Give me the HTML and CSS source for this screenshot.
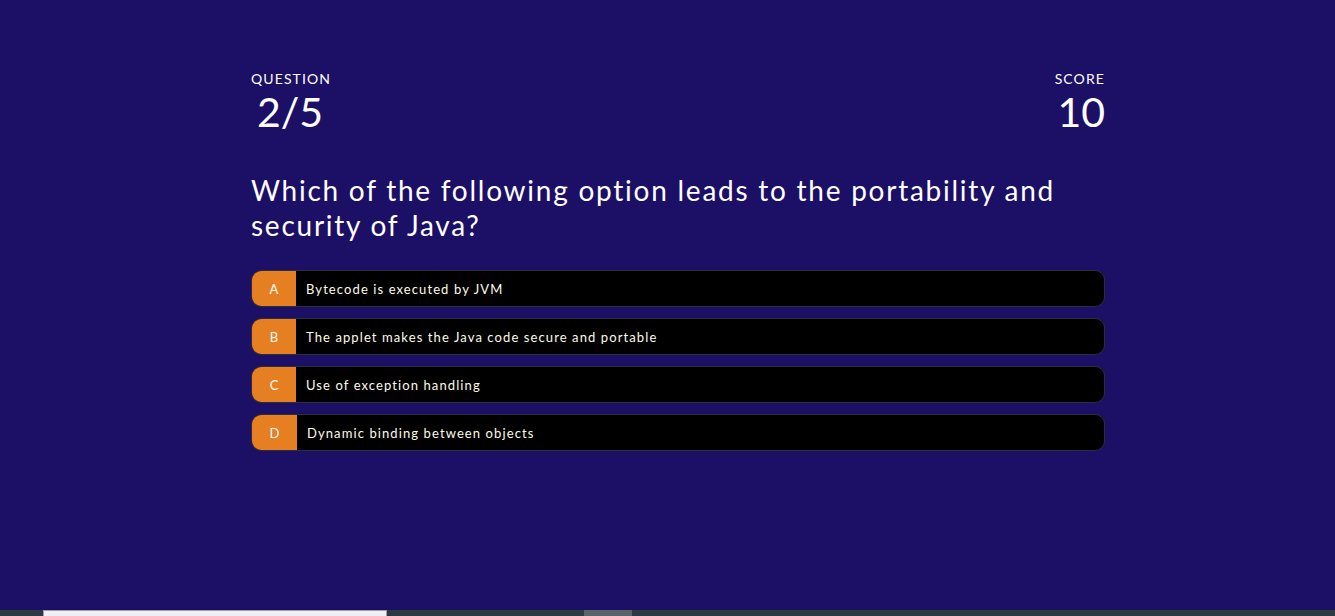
FILE: index.html
```html
<!DOCTYPE html>
<html lang="en">
<head>
<meta charset="utf-8">
<title>Quiz</title>
<link rel="stylesheet" href="styles.css">
</head>
<body>
<div class="page">
  <main class="quiz">
    <header class="stats">
      <div class="stat">
        <div class="stat-label">QUESTION</div>
        <div class="stat-value stat-value-indent">2/5</div>
      </div>
      <div class="stat stat-right">
        <div class="stat-label">SCORE</div>
        <div class="stat-value">10</div>
      </div>
    </header>
    <h1 class="question">Which of the following option leads to the portability and security of Java?</h1>
    <div class="options">
      <div class="option"><span class="letter">A</span><span class="text">Bytecode is executed by JVM</span></div>
      <div class="option"><span class="letter">B</span><span class="text">The applet makes the Java code secure and portable</span></div>
      <div class="option"><span class="letter">C</span><span class="text">Use of exception handling</span></div>
      <div class="option"><span class="letter letter-wide">D</span><span class="text">Dynamic binding between objects</span></div>
    </div>
  </main>
  <div class="strip">
    <div class="strip-gap1"></div>
    <div class="strip-box"></div>
    <div class="strip-gap2"></div>
    <div class="strip-thumb"></div>
    <div class="strip-rest"></div>
  </div>
</div>
</body>
</html>
```
FILE: styles.css
```css
html, body {
  margin: 0;
  padding: 0;
  background: #1c0f66;
}
.page {
  height: 616px;
  display: flex;
  flex-direction: column;
  font-family: Lato, "Noto Sans", sans-serif;
  color: #fff;
}
.quiz {
  flex: 1;
  width: 854px;
  margin-left: 251px;
  padding-top: 70px;
  box-sizing: border-box;
}
.stats {
  display: flex;
  justify-content: space-between;
}
.stat-right {
  text-align: right;
}
.stat-label {
  font-size: 14px;
  line-height: 17px;
  letter-spacing: 1.1px;
}
.stat-value {
  font-size: 41px;
  line-height: 50px;
}
.stat-value-indent {
  padding-left: 6px;
}
.question {
  margin: 36px 0 0;
  font-weight: 400;
  font-size: 28px;
  line-height: 35px;
  letter-spacing: 1.75px;
}
.options {
  margin-top: 27px;
  display: flex;
  flex-direction: column;
  gap: 11px;
}
.option {
  display: flex;
  height: 37px;
  box-sizing: border-box;
  background: #000;
  border: 1px solid #2a2e3a;
  border-radius: 10px;
  overflow: hidden;
  font-size: 13px;
  letter-spacing: 1.1px;
}
.letter {
  width: 44px;
  flex: none;
  background: #e67e22;
  display: flex;
  align-items: center;
  justify-content: center;
  letter-spacing: 0;
}
.letter-wide {
  width: 45px;
}
.text {
  display: flex;
  align-items: center;
  padding-left: 10px;
  color: #fffbe8;
}
.strip {
  height: 6px;
  display: flex;
  background: #2a3a3e;
}
.strip-gap1 { width: 43px; }
.strip-box {
  width: 342px;
  background: #f0f0f0;
  border: 1px solid #a0a0a8;
  border-bottom: none;
}
.strip-gap2 { width: 197px; }
.strip-thumb {
  width: 48px;
  background: #5a6468;
}
.strip-rest { flex: 1; }
```
